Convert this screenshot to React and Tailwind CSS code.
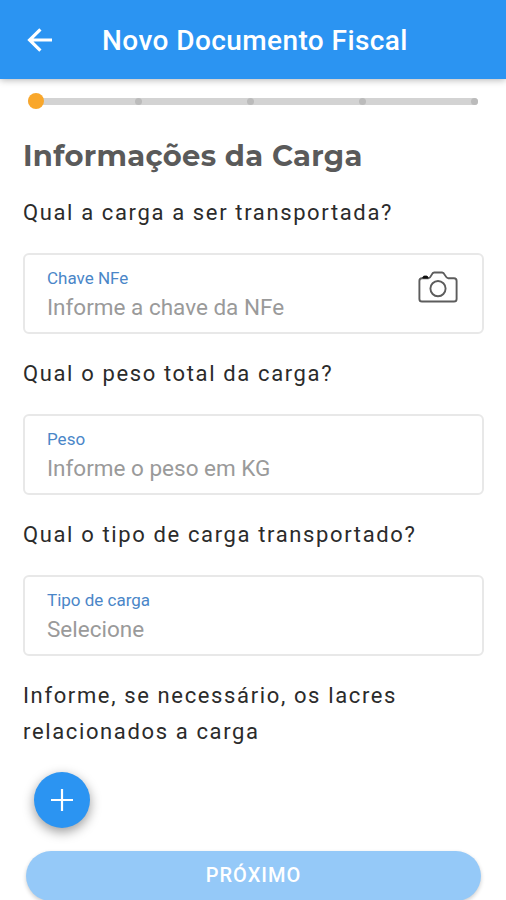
import React, { useState } from "react";

const steps = ["carga", "origem", "destino", "valores", "resumo"];

const fields = [
  {
    id: "nfe",
    question: "Qual a carga a ser transportada?",
    label: "Chave NFe",
    hint: "Informe a chave da NFe",
    camera: true,
  },
  {
    id: "peso",
    question: "Qual o peso total da carga?",
    label: "Peso",
    hint: "Informe o peso em KG",
  },
  {
    id: "tipo",
    question: "Qual o tipo de carga transportado?",
    label: "Tipo de carga",
    hint: "Selecione",
  },
];

const BackIcon = () => (
  <svg width="26" height="24" viewBox="0 0 26 24" fill="none" stroke="white" strokeWidth="3.2">
    <path d="M13.4 1.4 2.6 12l10.8 10.6M2.6 12H25" />
  </svg>
);

const CameraIcon = () => (
  <svg width="40" height="32" viewBox="0 0 40 32" fill="none" stroke="#5c5c5c" strokeWidth="1.9">
    <path
      strokeLinejoin="round"
      d="M4 7.3H10.5c2.8 0 2.8-5.8 5.6-5.8h8c2.8 0 3.2 5.8 6 5.8H36a2.6 2.6 0 0 1 2.6 2.6v18a2.6 2.6 0 0 1-2.6 2.6H4a2.6 2.6 0 0 1-2.6-2.6v-18A2.6 2.6 0 0 1 4 7.3Z"
    />
    <circle cx="20" cy="17.6" r="7.6" />
    <path d="M4.8 7c.2-1.5.8-1.900 1.600-1.900h2c.8 0 1.400.3 1.600 1.900Z" fill="#111" stroke="#111" strokeWidth="1" />
  </svg>
);

const PlusIcon = () => (
  <svg width="22" height="22" viewBox="0 0 22 22" stroke="white" strokeWidth="2.2">
    <path d="M11 0v22M0 11h22" />
  </svg>
);

const Stepper = ({ current }) => (
  <div className="mt-[14px] ml-[28px] mr-[28px] h-4 flex items-center">
    <div className="flex-1 h-[7px] rounded-sm bg-[#d3d3d3] flex items-center justify-between">
      {steps.map((step, idx) => (
        <span
          key={step}
          className={
            idx === current
              ? "w-4 h-4 mr-[-14.5px] rounded-full bg-[#f9a72b]"
              : "w-[7px] h-[7px] rounded-sm bg-[#bbb]"
          }
        />
      ))}
    </div>
  </div>
);

const Field = ({ field }) => (
  <div>
    <p className="h-9 leading-9 text-[22px] tracking-[1.63px] text-[#2b2b2b]">{field.question}</p>
    <div className="mt-[22px] mb-[22px] h-[81px] rounded-md border-2 border-[#e8e8e8] pl-[22px] pr-6 flex justify-between">
      <div className="pt-[13px]">
        <label className="block h-[20px] leading-[20px] text-[17px] text-[#4a86c8]">{field.label}</label>
        <span className="block mt-1 h-[30px] leading-[30px] text-[22.5px] text-[#9a9a9a]">{field.hint}</span>
      </div>
      {field.camera && (
        <button className="mt-4 h-8">
          <CameraIcon />
        </button>
      )}
    </div>
  </div>
);

const App = () => {
  const [current, setCurrent] = useState(0);

  return (
    <div className="h-[900px] overflow-hidden bg-white font-['Roboto',sans-serif]">
      {/* Header */}
      <header className="h-[79px] bg-[#2b94f2] shadow-[0_1px_7px_rgba(0,0,0,0.3)] flex items-center pl-[27px]">
        <button>
          <BackIcon />
        </button>
        <h1 className="ml-[49px] pt-[2px] text-[28px] font-medium tracking-[0.42px] text-white">
          Novo Documento Fiscal
        </h1>
      </header>

      <Stepper current={current} />

      {/* Form */}
      <main className="pl-[23px] pr-[22px]">
        <h2 className="mt-[27px] mb-[19px] h-10 leading-10 text-[29px] font-bold tracking-[0.3px] text-[#5a5a5a] font-['Montserrat','Inter',sans-serif]">
          Informações da Carga
        </h2>
        {fields.map((field) => (
          <Field key={field.id} field={field} />
        ))}
        <p className="leading-9 text-[22px] tracking-[1.63px] text-[#2b2b2b]">
          Informe, se necessário, os lacres relacionados a carga
        </p>
        <button className="mt-[22px] ml-[11px] w-14 h-14 rounded-full bg-[#2b94f2] shadow-[0_4px_12px_rgba(0,0,0,0.4)] flex items-center justify-center">
          <PlusIcon />
        </button>
        <button
          onClick={() => setCurrent((c) => Math.min(c + 1, steps.length - 1))}
          className="mt-[23px] ml-[3px] w-[455px] h-[50px] pb-[3px] rounded-full bg-[#95c9f8] shadow-[0_2px_4px_rgba(0,0,0,0.2)] text-[20px] font-medium tracking-[1px] text-white"
        >
          PRÓXIMO
        </button>
      </main>
    </div>
  );
};

export default App;
